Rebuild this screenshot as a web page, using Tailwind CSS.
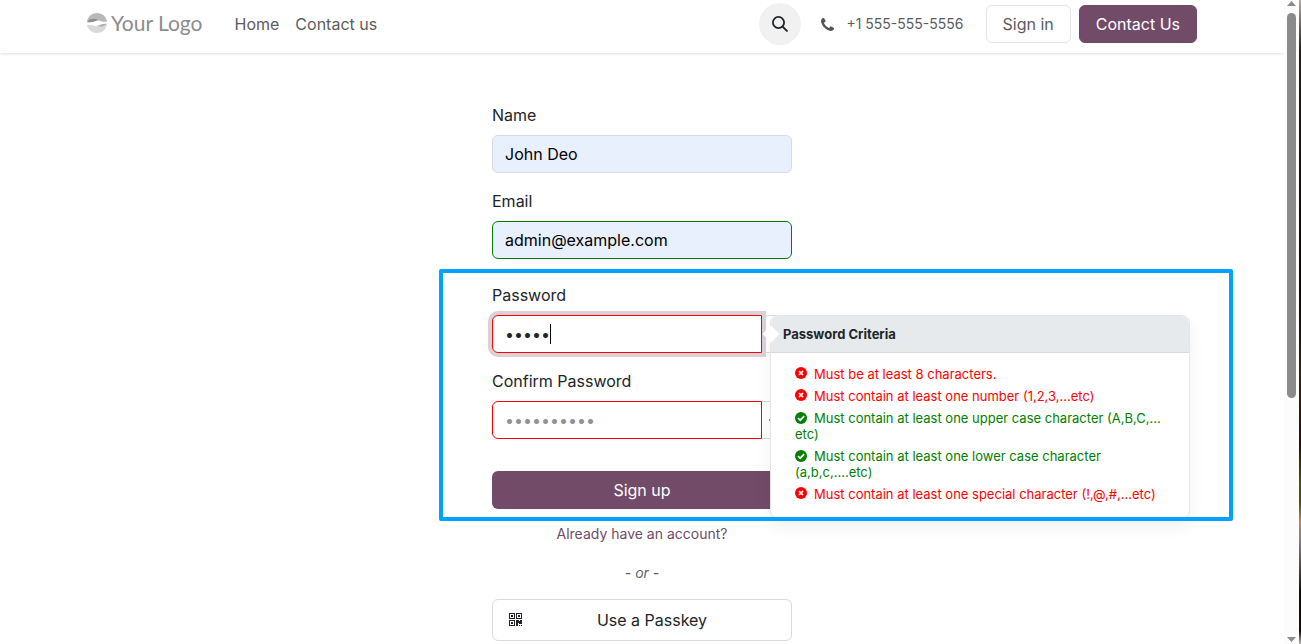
<!DOCTYPE html>
<html lang="en">
<head>
  <meta charset="UTF-8">
  <meta name="viewport" content="width=device-width, initial-scale=1">
  <title>Sign up | My Website</title>
  <script src="https://cdn.jsdelivr.net/npm/@tailwindcss/browser@4"></script>
</head>
<body class="flex h-screen overflow-hidden bg-white font-['Inter',sans-serif] text-base text-[#212529]">

  <div class="min-w-0 flex-1">
    <!-- Header -->
    <header class="h-[53px] shadow-[0_1px_3px_rgba(0,0,0,0.12)]">
      <div class="mx-auto flex h-12 max-w-[1110px] items-center">
        <a href="#" class="flex items-center gap-1 pb-[2px] text-[#8c8c8c]">
          <svg class="size-5" viewBox="0 0 20 20">
            <path d="M0 9C.5 3.800 4.800 0 10 0s9.500 3.800 10 8.500c-3 .8-6-.2-9-1.500C7 5.300 3 6 0 9z" fill="#b8b8b8"/>
            <path d="M0 9C2.500 5.500 7 4.800 12 7.300 9 7.300 6 10.400 0 9z" fill="#8f8f8f"/>
            <path d="M0 12c.8 4.700 5 8 10 8s9.200-3.300 10-8.500c-4 3-7.500 2.800-11 1.700-3-1-6-1.700-9-1.200z" fill="#d9d9d9"/>
            <path d="M20 11c-3.500 3.300-7.500 3.300-11 2 4-.4 6-2.800 11-2z" fill="#b0b0b0"/>
          </svg>
          <span class="font-['Lato',sans-serif] text-[21px] leading-6">Your Logo</span>
        </a>
        <nav class="ml-8 flex gap-4 text-[#5c5c5c]">
          <a href="#">Home</a>
          <a href="#">Contact us</a>
        </nav>
        <button type="button" aria-label="Search" class="ml-auto flex size-[42px] items-center justify-center rounded-full bg-[#f1f1f1]">
          <svg class="size-4" viewBox="0 0 16 16" fill="none" stroke="#212529" stroke-width="1.800">
            <circle cx="6.500" cy="6.500" r="5.600"/>
            <path d="M10.500 10.500l5 5"/>
          </svg>
        </button>
        <a href="tel:+15555555556" class="ml-5 flex items-center gap-3 text-sm text-[#5c5c5c]">
          <svg class="size-[13px]" viewBox="192 128 1408 1408" fill="#555555">
            <path d="M1600 1240q0 27-10 70.500t-21 68.500q-21 50-122 106-94 51-186 51-27 0-53-3.500t-57.500-12.500-47-14.500-55.500-20.500-49-18q-98-35-175-83-127-79-264-216t-216-264q-48-77-83-175-3-9-18-49t-20.500-55.500-14.500-47-12.500-57.500-3.500-53q0-92 51-186 56-101 106-122 25-11 68.500-21t70.500-10q14 0 21 3 18 6 53 76 11 19 30 54t35 63.500 31 53.500q3 4 17.500 25t21.500 35.500 7 28.500q0 20-28.500 50t-62 55-62 53-28.500 46q0 9 5 22.500t8.500 20.500 14 24 11.500 19q76 137 174 235t235 174q2 1 19 11.500t24 14 20.500 8.500 22.500 5q18 0 46-28.500t53-62 55-62 50-28.500q14 0 28.500 7t35.500 21.500 25 17.500q25 15 53.500 31t63.500 35 54 30q70 35 76 53 3 7 3 21z"/>
          </svg>
          <span>+1 555-555-5556</span>
        </a>
        <a href="#" class="ml-[22px] flex h-[38px] items-center rounded-md border border-[#e4e4e4] px-4 text-[#5c5c5c]">Sign in</a>
        <a href="#" class="ml-2 flex h-[38px] items-center rounded-md border border-[#714b67] bg-[#714b67] px-4 text-white">Contact Us</a>
      </div>
    </header>

    <!-- Sign up form -->
    <form class="relative mx-auto mt-[50px] flex w-[300px] flex-col" autocomplete="off">
      <label for="name">Name</label>
      <input id="name" type="text" value="John Deo" class="mt-2 h-[38px] rounded-md border border-[#d8dadd] bg-[#e8f0fe] px-3 text-black outline-none">

      <label for="login" class="mt-4">Email</label>
      <input id="login" type="text" value="admin@example.com" class="mt-2 h-[38px] rounded-md border border-[#008000] bg-[#e8f0fe] px-3 text-black outline-none">

      <!-- Password block -->
      <div class="relative mt-6 flex flex-col">
        <label for="password">Password</label>
        <div class="relative mt-2 flex h-[38px]">
          <input id="password" type="password" value="Abcde" class="w-[270px] rounded-l-md border border-[#ff0000] bg-white px-3 shadow-[0_0_0_4px_#dbd2d9] outline-none">
          <span class="flex-1 rounded-r-md border border-l-0 border-[#d8dadd]"></span>
          <span class="absolute top-[9px] left-[58px] h-5 w-px bg-black"></span>

          <!-- Criteria popover -->
          <div class="absolute top-0 left-[278px] z-10 w-[420px] rounded-lg border border-[#e3e5e7] bg-white text-[13px] leading-4 shadow-[0_8px_16px_rgba(0,0,0,0.06)]">
            <span class="absolute top-3 -left-[6px] size-3 rotate-45 bg-white"></span>
            <h3 class="flex h-[37px] items-center rounded-t-lg border-b border-[#d8dadd] bg-[#e7eaed] px-3 font-bold">Password Criteria</h3>
            <ul class="flex flex-col gap-[6px] px-6 pt-[13px] pb-4">
              <li class="text-[#ff0000]"><svg class="mr-[7px] inline size-3 -translate-y-[2px]" viewBox="0 0 12 12"><circle cx="6" cy="6" r="6" fill="currentColor"/><path d="M4 4l4 4M8 4l-4 4" stroke="#fff" stroke-width="1.700"/></svg>Must be at least 8 characters.</li>
              <li class="text-[#ff0000]"><svg class="mr-[7px] inline size-3 -translate-y-[2px]" viewBox="0 0 12 12"><circle cx="6" cy="6" r="6" fill="currentColor"/><path d="M4 4l4 4M8 4l-4 4" stroke="#fff" stroke-width="1.700"/></svg>Must contain at least one number (1,2,3,...etc)</li>
              <li class="text-[#008000]"><svg class="mr-[7px] inline size-3 -translate-y-px" viewBox="0 0 12 12"><circle cx="6" cy="6" r="6" fill="currentColor"/><path d="M3 6l2.200 2.200L9.200 4.200" fill="none" stroke="#fff" stroke-width="1.700"/></svg>Must contain at least one upper case character (A,B,C,...<wbr>etc)</li>
              <li class="text-[#008000]"><svg class="mr-[7px] inline size-3 -translate-y-px" viewBox="0 0 12 12"><circle cx="6" cy="6" r="6" fill="currentColor"/><path d="M3 6l2.200 2.200L9.200 4.200" fill="none" stroke="#fff" stroke-width="1.700"/></svg>Must contain at least one lower case character (a,b,c,....etc)</li>
              <li class="text-[#ff0000]"><svg class="mr-[7px] inline size-3 -translate-y-[2px]" viewBox="0 0 12 12"><circle cx="6" cy="6" r="6" fill="currentColor"/><path d="M4 4l4 4M8 4l-4 4" stroke="#fff" stroke-width="1.700"/></svg>Must contain at least one special character (!,@,#,...etc)</li>
            </ul>
          </div>
        </div>

        <label for="confirm" class="mt-4">Confirm Password</label>
        <div class="mt-2 flex h-[38px]">
          <input id="confirm" type="password" placeholder="••••••••••" class="w-[270px] rounded-l-md border border-[#ff0000] bg-white px-3 outline-none placeholder:text-[#909294]">
          <button type="button" aria-label="Show password" class="flex flex-1 items-center justify-center rounded-r-md border border-l-0 border-[#d8dadd]">
            <svg class="h-3 w-4" viewBox="0 0 16 12" fill="none" stroke="#212529" stroke-width="1.500">
              <path d="M1 6c3-6 11-6 14 0-3 6-11 6-14 0z"/>
              <circle cx="8" cy="6" r="2"/>
            </svg>
          </button>
        </div>

        <button type="submit" class="mt-8 h-[38px] rounded-md bg-[#714b67] text-white">Sign up</button>

        <!-- Highlight frame -->
        <div class="pointer-events-none absolute -top-[14px] -bottom-3 -left-[53px] z-20 w-[794px] rounded-xs border-4 border-[#00a2ff]"></div>
      </div>

      <a href="#" class="mt-[15px] text-center text-sm text-[#714b67]">Already have an account?</a>
      <em class="mt-[19px] text-center text-sm text-[#5f6366]">- or -</em>
      <button type="button" class="relative mt-4 h-[42px] rounded-md border border-[#d8dadd] pl-5">
        <svg class="absolute top-[13px] left-4 size-[13px]" viewBox="0 0 13 13" fill="#212529">
          <path fill-rule="evenodd" d="M0 0h6v6H0zM1 1v4h4V1zM7 0h6v6H7zM8 1v4h4V1zM0 7h6v6H0zM1 8v4h4V8z"/>
          <path d="M2 2h2v2H2zM9 2h2v2H9zM2 9h2v2H2zM7 7h3v1h1V7h2v4h-3v-1H9v3H7zM10 12h1v1h-1zM12 12h1v1h-1z"/>
        </svg>
        Use a Passkey
      </button>
    </form>
  </div>

  <!-- Scrollbar -->
  <div class="flex w-[15px] flex-col items-center bg-[#fcfcfc]">
    <svg class="mt-px h-[5px] w-[9px]" viewBox="0 0 9 5" fill="#8b8b8b"><path d="M4.500 0L9 5H0z"/></svg>
    <div class="mt-[7px] h-[385px] w-[9px] rounded-full bg-[#8b8b8b]"></div>
    <svg class="mt-auto mb-[2px] h-[5px] w-[9px]" viewBox="0 0 9 5" fill="#8b8b8b"><path d="M0 0h9L4.500 5z"/></svg>
  </div>
  <div class="w-[2px] bg-[linear-gradient(#b5a9a0_0%,#2a1a12_8%,#120600_45%,#3a2208_58%,#2a1000_69%,#4d5200_75%,#505000_78%,#c08848_81%,#8a7a88_84%,#5a4840_88%,#140a06_92%,#180c04_98%,#c0b8b0_100%)]"></div>

</body>
</html>
